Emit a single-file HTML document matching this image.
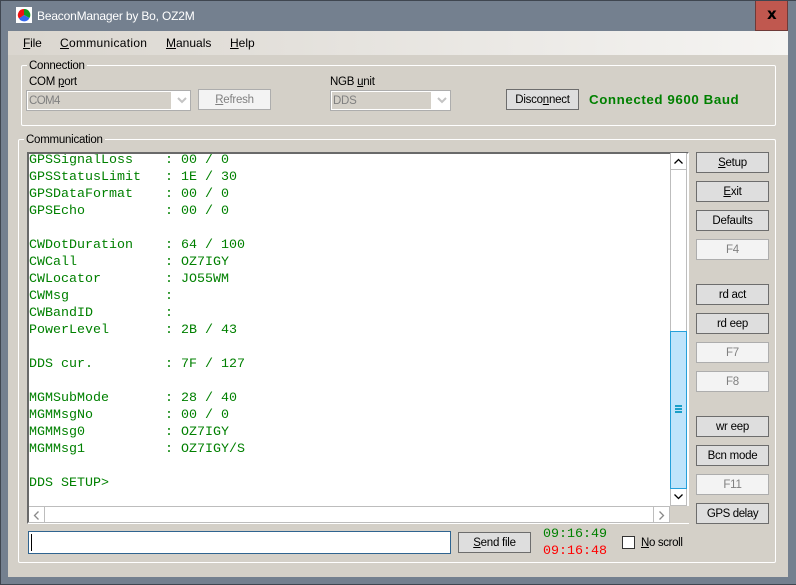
<!DOCTYPE html>
<html><head><meta charset="utf-8"><style>
html,body{margin:0;padding:0}
body{width:796px;height:585px;overflow:hidden;position:relative;background:#74808f;font:11.5px "Liberation Sans",sans-serif;letter-spacing:-.25px;color:#000}
div,span.a{position:absolute;box-sizing:border-box;white-space:pre}
u{text-underline-offset:1px}
.g{border:1px solid #fff;border-radius:2px}
.b{width:73px;height:21px;border:1px solid #6d6d6d;background:#dedede;text-align:center;line-height:20px;font-size:11.5px}
.d{border:1px solid #adadad;background:#f3f3f3;color:#808080}
.l{background:#d4d0c8;padding:0 2px;line-height:13px;height:13px}
.m{font-size:12px;line-height:15px;letter-spacing:0}
#t{left:0;top:-2px;font:13.33px/17px "Liberation Mono",monospace;letter-spacing:0;color:#008000}
</style></head><body>
<div style="left:0;top:0;width:796px;height:585px;border:1px solid #3f4650;border-right:0"></div>
<div style="left:16px;top:7px;width:16px;height:16px;background:#fff"></div>
<svg style="position:absolute;left:16px;top:7px" width="16" height="16"><path d="M8 8 L8 2 A6 6 0 0 1 13.5 11 Z" fill="#119922"/><path d="M8 8 L13.5 11 A6 6 0 0 1 3 11.5 Z" fill="#3366ee"/><path d="M8 8 L3 11.5 A6 6 0 0 1 8 2 Z" fill="#ee1111"/></svg>
<div style="left:37px;top:9px;color:#fff;font-size:12px;line-height:15px;letter-spacing:-.18px">BeaconManager by Bo, OZ2M</div>
<div style="left:755px;top:1px;width:33px;height:30px;background:#c0584f;border:1px solid #6e3a38;border-top:0"></div>
<div style="left:767px;top:4px;font:bold 15px/20px 'DejaVu Sans',sans-serif;letter-spacing:0;color:#000">x</div>
<div style="left:8px;top:31px;width:780px;height:546px;background:#d4d0c8"></div>
<div style="left:8px;top:31px;width:780px;height:24px;background:linear-gradient(90deg,#dad6cf,#f5f4f2)"></div>
<div class="m" style="left:23px;top:36px;letter-spacing:-.2px"><u>F</u>ile</div>
<div class="m" style="left:60px;top:36px;letter-spacing:.3px"><u>C</u>ommunication</div>
<div class="m" style="left:166px;top:36px"><u>M</u>anuals</div>
<div class="m" style="left:230px;top:36px"><u>H</u>elp</div>

<div class="g" style="left:21px;top:65px;width:755px;height:61px"></div>
<div class="l" style="left:27px;top:60px;height:12px">Connection</div>
<div style="left:29px;top:75px;line-height:14px">COM <u>p</u>ort</div>
<div style="left:26px;top:90px;width:165px;height:21px;background:#fff;border:1px solid #adadad"></div>
<div style="left:28px;top:92px;width:143px;height:17px;background:#d4d0c8;color:#808080;line-height:18px;padding-left:1px;letter-spacing:-.6px">COM4</div>
<svg style="position:absolute;left:177px;top:97px" width="11" height="8"><path d="M1 1 L5 5 L9 1" stroke="#c4c4c4" stroke-width="2" fill="none"/></svg>
<div class="b d" style="left:198px;top:89px"><u>R</u>efresh</div>
<div style="left:330px;top:75px;line-height:14px">NGB <u>u</u>nit</div>
<div style="left:330px;top:90px;width:121px;height:21px;background:#fff;border:1px solid #adadad"></div>
<div style="left:332px;top:92px;width:99px;height:17px;background:#d4d0c8;color:#808080;line-height:18px;padding-left:1px">DDS</div>
<svg style="position:absolute;left:437px;top:97px" width="11" height="8"><path d="M1 1 L5 5 L9 1" stroke="#c4c4c4" stroke-width="2" fill="none"/></svg>
<div class="b" style="left:506px;top:89px">Disco<u>n</u>nect</div>
<div style="left:589px;top:92px;color:#008000;font-weight:bold;font-size:13.33px;line-height:16px;letter-spacing:.58px">Connected 9600 Baud</div>

<div class="g" style="left:18px;top:139px;width:758px;height:424px"></div>
<div class="l" style="left:24px;top:134px;height:12px">Communication</div>

<div style="left:27px;top:152px;width:662px;height:372px;background:#fff;border:2px solid;border-color:#696969 #fff #fff #696969"></div>
<div style="left:29px;top:154px;width:641px;height:352px;overflow:hidden">
<div id="t">GPSSignalLoss    : 00 / 0
GPSStatusLimit   : 1E / 30
GPSDataFormat    : 00 / 0
GPSEcho          : 00 / 0

CWDotDuration    : 64 / 100
CWCall           : OZ7IGY
CWLocator        : JO55WM
CWMsg            :
CWBandID         :
PowerLevel       : 2B / 43

DDS cur.         : 7F / 127

MGMSubMode       : 28 / 40
MGMMsgNo         : 00 / 0
MGMMsg0          : OZ7IGY
MGMMsg1          : OZ7IGY/S

DDS SETUP&gt;</div></div>

<div style="left:670px;top:153px;width:17px;height:353px;background:#fff;border:1px solid #bdbdbd;border-width:0 1px"></div>
<div style="left:670px;top:153px;width:17px;height:17px;border:1px solid #bdbdbd;border-top:0;background:#fff"></div>
<svg style="position:absolute;left:673px;top:158px" width="11" height="8"><path d="M1.500 5.500 L5.500 1.500 L9.500 5.500" stroke="#000" stroke-width="1.300" fill="none"/></svg>
<div style="left:670px;top:331px;width:17px;height:158px;background:#bfe4fb;border:1px solid #26a0da"></div>
<div style="left:675px;top:405px;width:7px;height:2px;background:#1a9fc8"></div>
<div style="left:675px;top:408px;width:7px;height:2px;background:#1a9fc8"></div>
<div style="left:675px;top:411px;width:7px;height:2px;background:#1a9fc8"></div>
<div style="left:670px;top:489px;width:17px;height:17px;border:1px solid #bdbdbd;border-top:0;background:#fff"></div>
<svg style="position:absolute;left:673px;top:493px" width="11" height="8"><path d="M1.500 1.500 L5.500 5.500 L9.500 1.500" stroke="#000" stroke-width="1.300" fill="none"/></svg>

<div style="left:29px;top:506px;width:641px;height:17px;background:#fff;border-top:1px solid #bdbdbd;border-bottom:1px solid #bdbdbd"></div>
<div style="left:29px;top:506px;width:16px;height:17px;border:1px solid #bdbdbd;border-left:0;background:#fff"></div>
<svg style="position:absolute;left:33px;top:510px" width="8" height="11"><path d="M5.500 1.500 L1.500 5.500 L5.500 9.500" stroke="#8a8a8a" stroke-width="1.300" fill="none"/></svg>
<div style="left:653px;top:506px;width:17px;height:17px;border:1px solid #bdbdbd;background:#fff"></div>
<svg style="position:absolute;left:658px;top:510px" width="8" height="11"><path d="M1.500 1.500 L5.500 5.500 L1.500 9.500" stroke="#8a8a8a" stroke-width="1.300" fill="none"/></svg>
<div style="left:670px;top:506px;width:19px;height:17px;background:#d4d0c8"></div>

<div class="b" style="left:696px;top:152px"><u>S</u>etup</div>
<div class="b" style="left:696px;top:181px"><u>E</u>xit</div>
<div class="b" style="left:696px;top:210px">Defaults</div>
<div class="b d" style="left:696px;top:239px">F4</div>
<div class="b" style="left:696px;top:284px">rd act</div>
<div class="b" style="left:696px;top:313px">rd eep</div>
<div class="b d" style="left:696px;top:342px">F7</div>
<div class="b d" style="left:696px;top:371px">F8</div>
<div class="b" style="left:696px;top:416px">wr eep</div>
<div class="b" style="left:696px;top:445px">Bcn mode</div>
<div class="b d" style="left:696px;top:474px">F11</div>
<div class="b" style="left:696px;top:503px;letter-spacing:-.4px">GPS delay</div>

<div style="left:28px;top:531px;width:423px;height:23px;background:#fff;border:1px solid #2f6490"></div>
<div style="left:31px;top:534px;width:1px;height:17px;background:#000"></div>
<div class="b" style="left:458px;top:532px"><u>S</u>end file</div>
<div style="left:543px;top:527px;font:13.33px/16px 'Liberation Mono',monospace;letter-spacing:0;color:#008000">09:16:49</div>
<div style="left:543px;top:544px;font:13.33px/16px 'Liberation Mono',monospace;letter-spacing:0;color:#ff0000">09:16:48</div>
<div style="left:622px;top:536px;width:13px;height:13px;background:#fff;border:1px solid #333"></div>
<div style="left:641px;top:536px;line-height:14px;letter-spacing:-.35px"><u>N</u>o scroll</div>
</body></html>
